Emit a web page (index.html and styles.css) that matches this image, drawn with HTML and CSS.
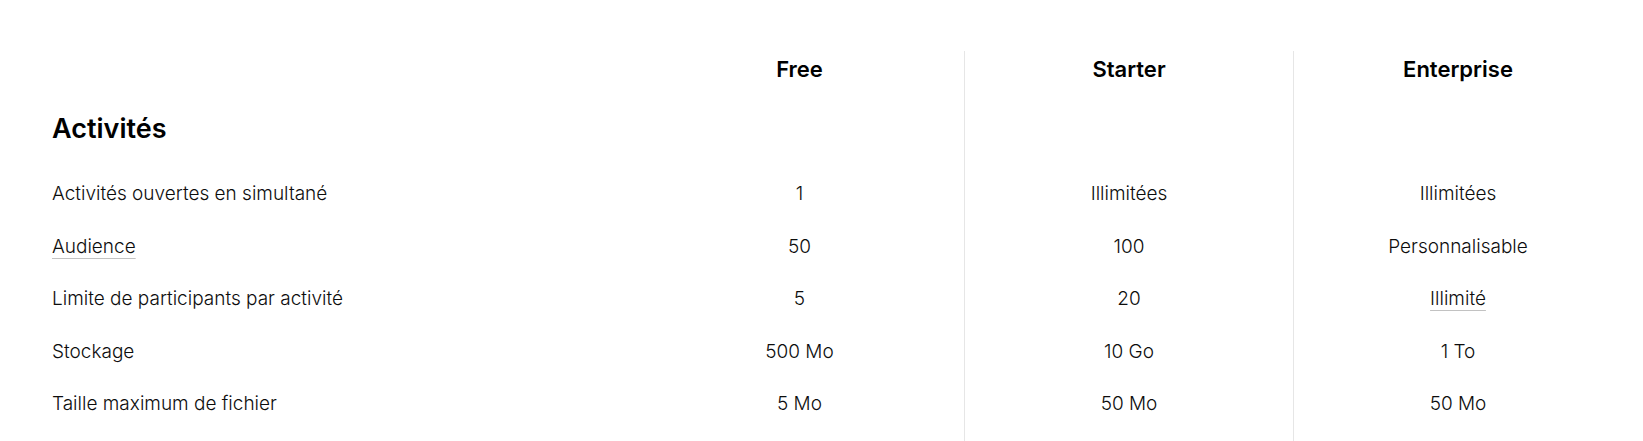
FILE: index.html
```html
<!DOCTYPE html>
<html lang="fr">
<head>
<meta charset="utf-8">
<title>Comparatif des offres</title>
<link rel="stylesheet" href="styles.css">
</head>
<body>
<section class="compare">
  <div class="grid">
    <div class="cell head-empty"></div>
    <div class="cell plan">Free</div>
    <div class="cell plan sep">Starter</div>
    <div class="cell plan sep">Enterprise</div>

    <div class="cell section"><h2>Activités</h2></div>
    <div class="cell section-empty"></div>
    <div class="cell section-empty sep"></div>
    <div class="cell section-empty sep"></div>

    <div class="cell label">Activités ouvertes en simultané</div>
    <div class="cell value">1</div>
    <div class="cell value sep">Illimitées</div>
    <div class="cell value sep">Illimitées</div>

    <div class="cell label"><span class="hint">Audience</span></div>
    <div class="cell value">50</div>
    <div class="cell value sep">100</div>
    <div class="cell value sep">Personnalisable</div>

    <div class="cell label">Limite de participants par activité</div>
    <div class="cell value">5</div>
    <div class="cell value sep">20</div>
    <div class="cell value sep"><span class="hint">Illimité</span></div>

    <div class="cell label">Stockage</div>
    <div class="cell value">500 Mo</div>
    <div class="cell value sep">10 Go</div>
    <div class="cell value sep">1 To</div>

    <div class="cell label">Taille maximum de fichier</div>
    <div class="cell value">5 Mo</div>
    <div class="cell value sep">50 Mo</div>
    <div class="cell value sep">50 Mo</div>

    <div class="cell tail"></div>
    <div class="cell tail"></div>
    <div class="cell tail sep"></div>
    <div class="cell tail sep"></div>
  </div>
</section>
</body>
</html>
```

FILE: styles.css
```css
html, body {
  margin: 0;
  padding: 0;
  background: #ffffff;
}

body {
  font-family: Inter, "Noto Sans", "Liberation Sans", sans-serif;
  color: #0d0d0d;
}

.compare {
  padding: 51px 21px 0 20px;
}

.grid {
  display: grid;
  grid-template-columns: 1fr 329px 329px 329px;
  grid-template-rows: 36px 81px;
  grid-auto-rows: 52.6px;
}

.cell {
  display: flex;
  align-items: center;
  justify-content: center;
  min-width: 0;
}

.sep {
  border-left: 1px solid #e6e6e6;
}

.plan {
  font-size: 22px;
  font-weight: 600;
  color: #000000;
  line-height: 1.2;
}

.section {
  justify-content: flex-start;
  padding-left: 32px;
  padding-top: 4px;
}

.section h2 {
  margin: 0;
  font-size: 27px;
  font-weight: 600;
  color: #000000;
  line-height: 1.2;
}

.label {
  justify-content: flex-start;
  padding-left: 32px;
  font-size: 19px;
  font-weight: 300;
  line-height: 1.4;
}

.value {
  font-size: 19px;
  font-weight: 300;
  line-height: 1.4;
}

.hint {
  text-decoration-line: underline;
  text-decoration-color: #c2c2c2;
  text-decoration-thickness: 1px;
  text-underline-offset: 5px;
  text-decoration-skip-ink: none;
}

.tail {
  height: 40px;
}
```
